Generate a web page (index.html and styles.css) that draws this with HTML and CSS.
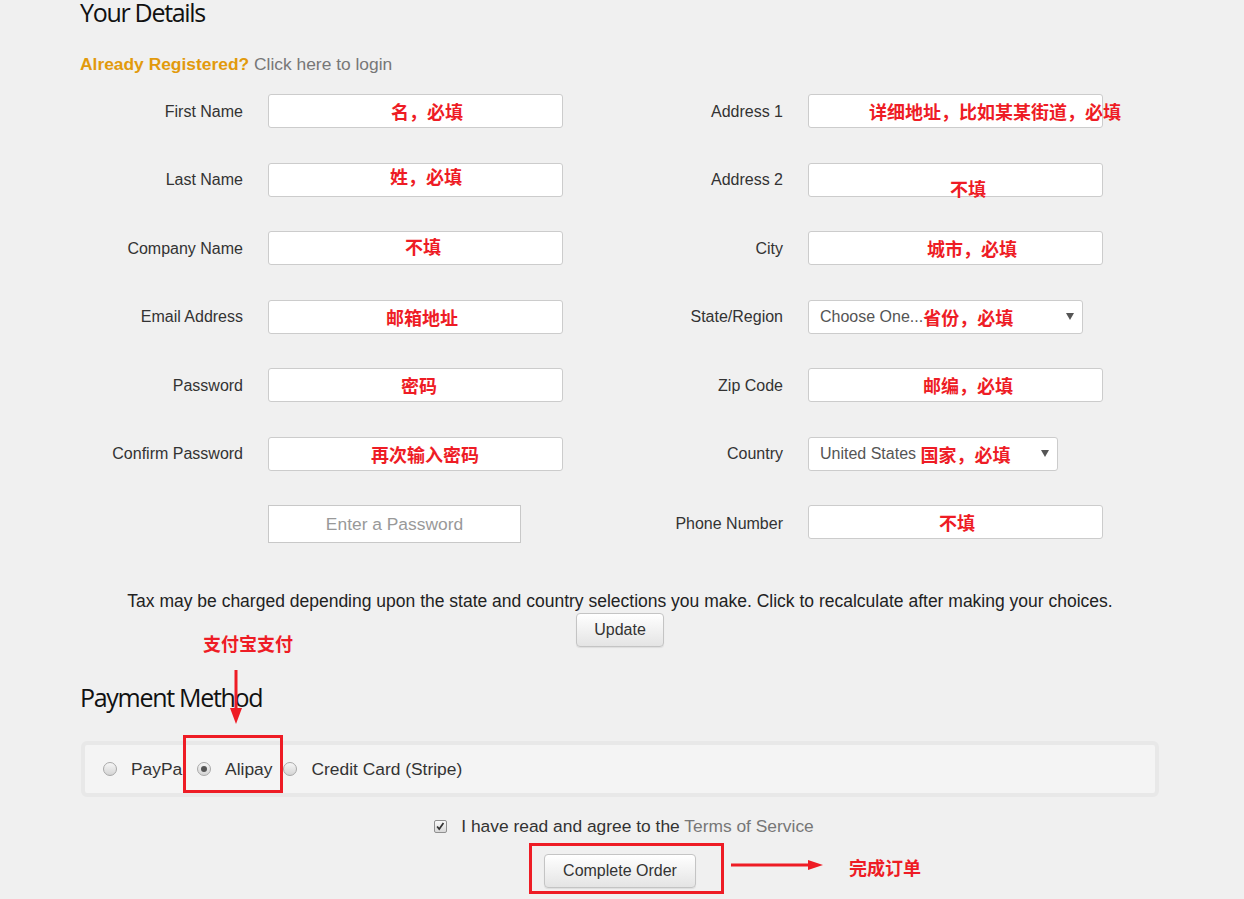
FILE: index.html
```html
<!DOCTYPE html>
<html lang="en">
<head>
<meta charset="utf-8">
<title>Checkout</title>
<link rel="stylesheet" href="styles.css">
</head>
<body>
<div class="page">
  <div class="content">
    <h1 class="title">Your Details</h1>
    <div class="login"><span class="login-q">Already Registered?</span> <span class="login-link">Click here to login</span></div>

    <div class="form">
      <div class="col col-left">
        <div class="row"><div class="label">First Name</div><div class="box"><span class="note n-first">名，必填</span></div></div>
        <div class="row"><div class="label">Last Name</div><div class="box"><span class="note n-last">姓，必填</span></div></div>
        <div class="row"><div class="label">Company Name</div><div class="box"><span class="note n-company">不填</span></div></div>
        <div class="row"><div class="label">Email Address</div><div class="box"><span class="note n-email">邮箱地址</span></div></div>
        <div class="row"><div class="label">Password</div><div class="box"><span class="note n-pass">密码</span></div></div>
        <div class="row"><div class="label">Confirm Password</div><div class="box"><span class="note n-confirm">再次输入密码</span></div></div>
        <div class="row row-tall"><div class="label"></div><div class="plain-input">Enter a Password</div></div>
      </div>
      <div class="col col-right">
        <div class="row"><div class="label">Address 1</div><div class="box"><span class="note n-addr1">详细地址，比如某某街道，必填</span></div></div>
        <div class="row"><div class="label">Address 2</div><div class="box"><span class="note n-addr2">不填</span></div></div>
        <div class="row"><div class="label">City</div><div class="box"><span class="note n-city">城市，必填</span></div></div>
        <div class="row"><div class="label">State/Region</div><div class="box select select-state"><span class="sel-text">Choose One...</span><span class="note">省份，必填</span><span class="caret"></span></div></div>
        <div class="row"><div class="label">Zip Code</div><div class="box"><span class="note n-zip">邮编，必填</span></div></div>
        <div class="row"><div class="label">Country</div><div class="box select select-country"><span class="sel-text">United States</span>&nbsp;<span class="note">国家，必填</span><span class="caret"></span></div></div>
        <div class="row"><div class="label label-low">Phone Number</div><div class="box"><span class="note n-phone">不填</span></div></div>
      </div>
    </div>

    <p class="tax">Tax may be charged depending upon the state and country selections you make. Click to recalculate after making your choices.</p>
    <div class="btn-wrap"><button class="btn btn-update">Update</button></div>

    <h2 class="title pay-title">Payment Method</h2>
    <div class="panel">
      <div class="opt"><span class="radio"></span><span class="opt-label">PayPal</span></div>
      <div class="opt"><span class="radio on"></span><span class="opt-label">Alipay</span></div>
      <div class="opt"><span class="radio"></span><span class="opt-label">Credit Card (Stripe)</span></div>
    </div>

    <div class="agree">
      <span class="check"><svg viewBox="0 0 13 13" width="11" height="11"><path d="M2.5 6.5 L5 9.5 L10 2.5" stroke="#333" stroke-width="2" fill="none"/></svg></span>
      <span>I have read and agree to the <span class="tos">Terms of Service</span></span>
    </div>
    <div class="btn-wrap order-wrap"><button class="btn btn-order">Complete Order</button></div>
  </div>

  <div class="ann ann-alipay">支付宝支付</div>
  <svg class="ann arrow-down" width="14" height="54" viewBox="0 0 14 54"><line x1="7" y1="0" x2="7" y2="40" stroke="#ee1c25" stroke-width="3"/><polygon points="1,38 13,38 7,54" fill="#ee1c25"/></svg>
  <div class="ann redbox redbox-alipay"></div>
  <div class="ann redbox redbox-order"></div>
  <svg class="ann arrow-right" width="92" height="12" viewBox="0 0 92 12"><line x1="0" y1="6" x2="80" y2="6" stroke="#ee1c25" stroke-width="3"/><polygon points="77,1 77,11 92,6" fill="#ee1c25"/></svg>
  <div class="ann ann-order">完成订单</div>
</div>
</body>
</html>
```

FILE: styles.css
```css
* { box-sizing: border-box; }
body {
  margin: 0;
  background: #f0f0f0;
  font-family: "Liberation Sans", Arial, sans-serif;
  color: #333;
}
.page {
  position: relative;
  width: 1244px;
  height: 899px;
  padding-left: 80px;
  overflow: hidden;
}
.content { width: 1080px; }

.title {
  margin: 0;
  font-family: "Open Sans", sans-serif;
  font-weight: 400;
  font-size: 25px;
  line-height: 25px;
  color: #111;
  letter-spacing: -1.3px;
}
.login {
  margin-top: 29px;
  font-size: 17.4px;
  line-height: 20px;
}
.login-q { color: #e29a0c; font-weight: 700; }
.login-link { color: #777; }

.form { display: flex; margin-top: 20px; }
.col { display: flex; flex-direction: column; gap: 34.5px; }
.row { display: flex; align-items: center; height: 34px; }
.row-tall { height: 38px; }
.label {
  text-align: right;
  font-size: 16px;
  line-height: 20px;
  margin-right: 25px;
  color: #333;
  padding-top: 1px;
}
.label-low { padding-top: 4px; }
.col-left .label { width: 163px; }
.col-right .label { width: 220px; }

.box {
  width: 295px;
  height: 34px;
  background: #fff;
  border: 1px solid #ccc;
  border-radius: 3px;
  display: flex;
  align-items: center;
  white-space: nowrap;
}
.note {
  font-family: "Noto Sans CJK SC", sans-serif;
  font-weight: 700;
  font-size: 18px;
  line-height: 22px;
  color: #ee1c25;
}
.n-first { margin-left: 122px; }
.n-last { margin-left: 121px; padding-bottom: 8px; }
.n-company { margin-left: 136px; padding-bottom: 4px; }
.n-email { margin-left: 117px; }
.n-pass { margin-left: 132px; }
.n-confirm { margin-left: 102px; }
.n-addr1 { margin-left: 60px; }
.n-addr2 { margin-left: 141px; padding-top: 17px; }
.n-city { margin-left: 118px; }
.n-zip { margin-left: 114px; }
.n-phone { margin-left: 130px; }

.plain-input {
  width: 253px;
  height: 38px;
  background: #fff;
  border: 1px solid #c8c8c8;
  display: flex;
  align-items: center;
  justify-content: center;
  font-size: 17.4px;
  color: #999;
}

.select { padding-left: 11px; }
.select-state { width: 275px; }
.select-country { width: 250px; }
.sel-text { font-size: 16px; color: #555; }
.caret {
  margin-left: auto;
  margin-right: 8px;
  width: 0;
  height: 0;
  border-left: 4px solid transparent;
  border-right: 4px solid transparent;
  border-top: 7px solid #555;
}

.tax {
  margin: 48px 0 0;
  text-align: center;
  font-size: 17.5px;
  line-height: 20px;
  color: #222;
}
.btn-wrap { display: flex; justify-content: center; margin-top: 2px; }
.btn {
  height: 34px;
  font-family: "Liberation Sans", Arial, sans-serif;
  font-size: 16px;
  color: #333;
  background: linear-gradient(#ffffff, #e4e4e4);
  border: 1px solid #c4c4c4;
  border-radius: 4px;
  box-shadow: 0 1px 1px rgba(0,0,0,0.08);
}
.btn-update { padding: 0 17px; }
.btn-order { padding: 0 18px; }
.order-wrap { margin-top: 18px; }

.pay-title { margin-top: 38px; }

.panel {
  margin-top: 31px;
  margin-left: 1px;
  width: 1078px;
  height: 56px;
  border: 4px solid #e8e8e8;
  border-radius: 6px;
  background: #f4f4f4;
  display: flex;
  align-items: center;
  padding-left: 18px;
}
.opt { display: flex; align-items: center; margin-right: 11px; }
.radio {
  width: 14px;
  height: 14px;
  border-radius: 50%;
  border: 1px solid #a8a8a8;
  background: linear-gradient(#f6f6f6, #d4d4d4);
  margin-right: 14px;
  display: flex;
  align-items: center;
  justify-content: center;
}
.radio.on::after {
  content: "";
  width: 6px;
  height: 6px;
  border-radius: 50%;
  background: #555;
}
.opt-label { font-size: 17.4px; line-height: 20px; color: #333; }

.agree {
  margin-top: 19px;
  display: flex;
  justify-content: center;
  align-items: center;
  height: 20px;
  font-size: 17.4px;
  color: #333;
  padding-left: 8px;
}
.check {
  width: 13px;
  height: 13px;
  border: 1px solid #909090;
  border-radius: 2px;
  background: linear-gradient(#fafafa, #d8d8d8);
  margin-right: 14px;
  display: flex;
  align-items: center;
  justify-content: center;
}
.tos { color: #777; }

.ann { position: absolute; }
.ann-alipay, .ann-order {
  font-family: "Noto Sans CJK SC", sans-serif;
  font-weight: 700;
  font-size: 18px;
  line-height: 24px;
  color: #ee1c25;
}
.ann-alipay { left: 203px; top: 631px; }
.ann-order { left: 849px; top: 855px; }
.arrow-down { left: 229px; top: 670px; }
.arrow-right { left: 731px; top: 859px; }
.redbox { border: 3px solid #ee1c25; }
.redbox-alipay { left: 183px; top: 735px; width: 100px; height: 58px; }
.redbox-order { left: 529px; top: 843px; width: 195px; height: 51px; }
```
